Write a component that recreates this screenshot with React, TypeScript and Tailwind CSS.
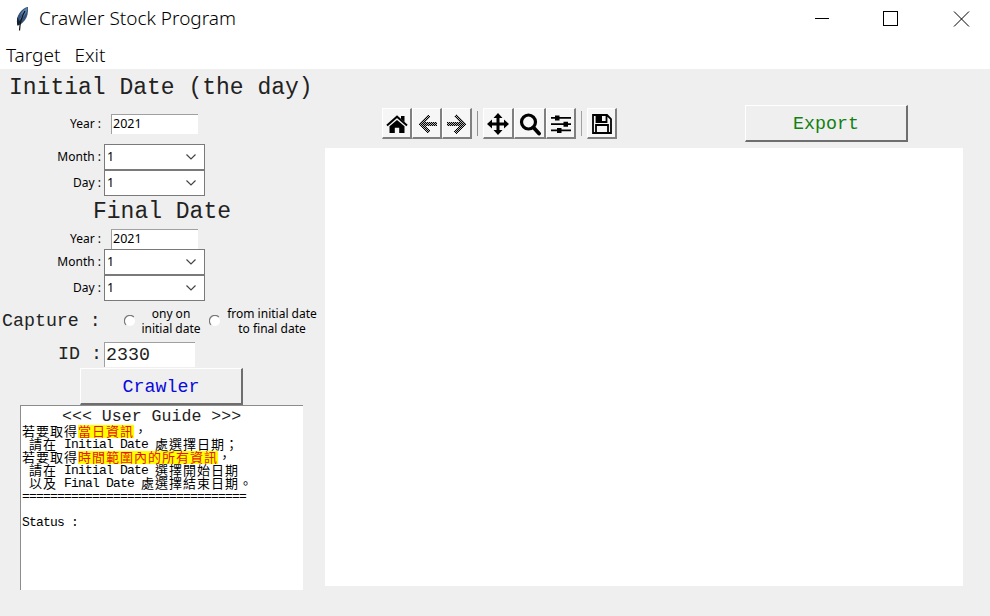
import React from "react";

const MONO = "font-['Liberation_Mono',monospace]";

function Feather() {
  return (
    <svg width="16" height="26" viewBox="0 0 16 26">
      <path d="M15 1C11 1.500 6 6 4.500 11c-.800 3-.700 6 0 8.500l2-.500c4-2.500 7-6 8-10.500.500-2.500.700-5 .5-7.500z" fill="#34537b" />
      <path d="M14.500 1.500C11 3 8 6 7 10l3-3-3.500 7 4.500-4c2-2.500 3.500-5 3.500-8.500z" fill="#5c7fa8" />
      <path d="M4.500 11c-.800 3-.700 6 0 8.500l1.500-.500L8 14l-2 1z" fill="#16202e" />
      <path d="M12 5C9 10 7 15 6.500 24.500" fill="none" stroke="#111" strokeWidth="1.200" />
    </svg>
  );
}

function TitleBar() {
  return (
    <header className="flex h-[37px] items-center pl-[13px]">
      <Feather />
      <h1 className="ml-[10px] text-[19px] leading-[37px] font-light whitespace-nowrap">Crawler Stock Program</h1>
      <svg className="ml-auto" width="175" height="37" viewBox="0 0 175 37" fill="none" stroke="#000" strokeWidth="1">
        <path d="M0 18.500H14" />
        <rect x="68.500" y="11.500" width="14" height="14" />
        <path d="M139 11.500l15 15M154 11.500l-15 15" />
      </svg>
    </header>
  );
}

function Label({ children }: { children: React.ReactNode }) {
  return <span className="w-[101px] text-right text-[12px] whitespace-nowrap">{children}</span>;
}

function YearRow() {
  return (
    <div className="flex h-[20px] items-center">
      <Label>Year :</Label>
      <div className="ml-[10px] h-full w-[87px] border-t border-l border-[#a0a0a0] bg-white pl-[1px] text-[12.5px] leading-[17px]">2021</div>
    </div>
  );
}

function ComboRow({ label }: { label: string }) {
  return (
    <div className="flex h-[26px] items-center">
      <Label>{label}</Label>
      <div className="ml-[3px] flex h-full w-[101px] items-center justify-between border border-[#7a7a7a] bg-white pr-[8px] pl-[2px] text-[12.5px]">
        <span>1</span>
        <svg width="10" height="6" viewBox="0 0 10 6" fill="none" stroke="#444" strokeWidth="1.200">
          <path d="M.5.5L5 5 9.500.5" />
        </svg>
      </div>
    </div>
  );
}

function Radio() {
  return (
    <svg width="12" height="12" viewBox="0 0 12 12">
      <circle cx="6" cy="6" r="5" fill="#fff" />
      <path d="M2 9.800A5 5 0 0 1 9.800 2" fill="none" stroke="#777" strokeWidth="1.200" />
    </svg>
  );
}

function BigButton({ children, color }: { children: string; color: string }) {
  return (
    <button className={`${MONO} ${color} h-[37px] w-[163px] border-t border-r-2 border-b-2 border-l border-t-white border-r-[#6e6e6e] border-b-[#6e6e6e] border-l-white bg-[#efefef] pt-[2px] text-[18.300px] leading-[32px]`}>
      {children}
    </button>
  );
}

function ToolButton({ children, className = "w-[30px]" }: { children: React.ReactNode; className?: string }) {
  return (
    <button className={`flex h-[31px] items-center justify-center border-t border-r-2 border-b-2 border-l border-t-white border-r-[#808080] border-b-[#808080] border-l-white bg-[#f6f6f6] pt-[2px] ${className}`}>
      {children}
    </button>
  );
}

function Arrow({ flip = false, id }: { flip?: boolean; id: string }) {
  return (
    <svg width="20" height="20" viewBox="0 0 20 20" shapeRendering="crispEdges">
      <defs>
        <pattern id={id} width="2" height="2" patternUnits="userSpaceOnUse">
          <path d="M0 0h2v2H0z" fill="#b4b4b4" />
          <path d="M0 0h1v1H0zM1 1h1v1H1z" fill="#000" />
        </pattern>
      </defs>
      <path
        d={flip ? "M9 0l10 10L9 20l-2-3 5-5H0V8h12L7 3z" : "M11 0L1 10l10 10 2-3-5-5h12V8H8l5-5z"}
        fill={`url(#${id})`}
      />
    </svg>
  );
}

function Toolbar() {
  return (
    <div className="mt-[39px] ml-[57px] flex h-[31px]">
      <ToolButton>
        <svg width="22" height="19" viewBox="0 0 22 19">
          <path d="M11 5l7.500 6.300V18h-5.300v-5.300H8.800V18H3.500v-6.700z" fill="#000" />
          <path d="M1 10.500L11 1.700l10 8.800" fill="none" stroke="#000" strokeWidth="2" />
          <path d="M15 1h3.500v6L15 4z" fill="#000" />
        </svg>
      </ToolButton>
      <ToolButton><Arrow id="dither-back" /></ToolButton>
      <ToolButton><Arrow id="dither-forward" flip /></ToolButton>
      <i className="mt-[3px] ml-[5px] h-[25px] w-px bg-[#909090]" />
      <ToolButton className="ml-[5px] w-[31px]">
        <svg width="24" height="24" viewBox="0 0 24 24">
          <path d="M12 1l4.500 5h-3v4.500H18v-3l5 4.500-5 4.500v-3h-4.500V18h3L12 23l-4.500-5h3v-4.500H6v3L1 12l5-4.500v3h4.500V6h-3z" fill="#000" />
        </svg>
      </ToolButton>
      <ToolButton className="w-[32px]">
        <svg width="24" height="24" viewBox="0 0 24 24" fill="none" stroke="#000">
          <circle cx="10.500" cy="10" r="7" strokeWidth="3.200" />
          <path d="M15.500 15.500l5.500 6" strokeWidth="3.800" strokeLinecap="round" />
        </svg>
      </ToolButton>
      <ToolButton>
        <svg width="20" height="20" viewBox="0 0 20 20">
          <path d="M0 3h20v1.800H0zM0 9.300h20v1.800H0zM0 15.500h20v1.800H0z" />
          <path d="M4 1.500h4.500v5H4zM12.500 7.800H17v5h-4.500zM6 14h4.500v5H6z" />
        </svg>
      </ToolButton>
      <i className="mt-[3px] ml-[5px] h-[25px] w-px bg-[#a0a0a0]" />
      <ToolButton className="ml-[5px] w-[30px]">
        <svg width="20" height="20" viewBox="0 0 20 20" fill="none" stroke="#000" strokeWidth="1.800">
          <path d="M1 1h14l4 4v14H1zM4 18v-7h12v7M4.500 1v7h10V1" />
          <path d="M5 1h5v6H5z" fill="#000" stroke="none" />
        </svg>
      </ToolButton>
    </div>
  );
}

function CJK({ children, className = "" }: { children: string; className?: string }) {
  return (
    <span className={`inline-block h-[13px] shrink-0 font-['Noto_Sans_CJK_TC',sans-serif] text-[13px] leading-[12px] tracking-[1px] ${className}`}>
      {children}
    </span>
  );
}

function Line({ children }: { children: React.ReactNode }) {
  return <p className="flex h-[13px] leading-[14px] whitespace-pre">{children}</p>;
}

function Guide() {
  const hl = "bg-[#ffff00] text-[#e8140c]";
  return (
    <div className={`${MONO} ml-[20px] h-[185px] w-[283px] border-t border-l border-[#8c8c8c] bg-white pl-[1px] text-black`}>
      <p className="h-[19px] pl-[40px] text-[16.600px] leading-[21px] whitespace-pre text-[#222]">{"<<< User Guide >>>"}</p>
      <div className="text-[13px] tracking-[-0.800px]">
        <Line><CJK>若要取得</CJK><CJK className={hl}>當日資訊</CJK><CJK>，</CJK></Line>
        <Line><span> </span><CJK>請在</CJK><span> Initial Date </span><CJK>處選擇日期；</CJK></Line>
        <Line><CJK>若要取得</CJK><CJK className={hl}>時間範圍內的所有資訊</CJK><CJK>，</CJK></Line>
        <Line><span> </span><CJK>請在</CJK><span> Initial Date </span><CJK>選擇開始日期</CJK></Line>
        <Line><span> </span><CJK>以及</CJK><span> Final Date </span><CJK>處選擇結束日期。</CJK></Line>
        <Line>================================</Line>
        <div className="h-[13px]" />
        <Line>Status :</Line>
      </div>
    </div>
  );
}

export default function App() {
  return (
    <div className="h-[616px] w-[990px] overflow-hidden bg-white font-['Noto_Sans',sans-serif] text-black">
      <TitleBar />
      <nav className="flex h-[32px] gap-[14px] pl-[6px] text-[19px] leading-[36px] font-light">
        <span>Target</span>
        <span>Exit</span>
      </nav>
      <main className="flex h-[547px] bg-[#efefef]">
        <section className="w-[325px] shrink-0">
          <h2 className={`${MONO} h-[45px] pl-[9px] text-[23px] leading-[38px] whitespace-nowrap text-[#222]`}>Initial Date (the day)</h2>
          <YearRow />
          <div className="h-[10px]" />
          <ComboRow label="Month :" />
          <ComboRow label="Day :" />
          <h2 className={`${MONO} h-[33px] pl-[93px] text-[23px] leading-[32px] whitespace-nowrap text-[#222]`}>Final Date</h2>
          <YearRow />
          <ComboRow label="Month :" />
          <ComboRow label="Day :" />
          <div className="flex h-[40px] items-center pl-[2px] text-[12px] leading-[15px]">
            <span className={`${MONO} w-[122px] text-[18.300px] text-[#222]`}>Capture :</span>
            <Radio />
            <span className="ml-[4px] w-[62px] text-center whitespace-nowrap">ony on<br />initial date</span>
            <span className="ml-[7px] flex"><Radio /></span>
            <span className="ml-[5px] w-[92px] text-center whitespace-nowrap">from initial date<br />to final date</span>
          </div>
          <div className={`${MONO} flex h-[27px] items-center text-[18.300px] text-[#222]`}>
            <span className="w-[102px] pt-[1px] text-right">ID :</span>
            <div className="ml-[2px] h-[25px] w-[91px] border-t border-l border-[#a0a0a0] bg-white pl-[1px] leading-[24px]">2330</div>
          </div>
          <div className="flex pl-[80px]">
            <BigButton color="text-[#0a0adc]">Crawler</BigButton>
          </div>
          <Guide />
        </section>
        <section className="w-[638px]">
          <div className="flex h-[79px]">
            <Toolbar />
            <div className="mt-[36px] ml-auto mr-[55px]">
              <BigButton color="text-[#128012]">Export</BigButton>
            </div>
          </div>
          <div className="h-[438px] bg-white" />
        </section>
      </main>
    </div>
  );
}
